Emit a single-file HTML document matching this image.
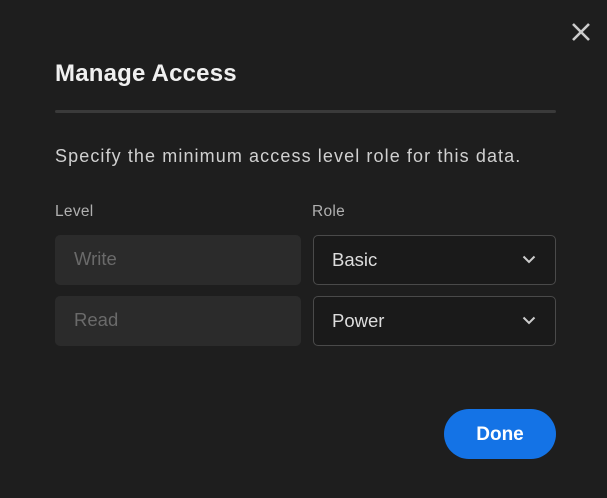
<!DOCTYPE html>
<html><head><style>
*{margin:0;padding:0;box-sizing:border-box}
body{width:607px;height:498px;background:#1e1e1e;font-family:"Liberation Sans",sans-serif;position:relative;overflow:hidden;color:#ddd}
.a{position:absolute}
h1{position:absolute;left:55px;top:60px;font-size:24px;font-weight:bold;color:#f0f0f0;letter-spacing:0.2px}
.hr{left:55px;top:110px;width:501px;height:3px;background:#3a3a3a;border-radius:2px}
.p{left:55px;top:146px;font-size:18px;color:#d0d0d0;letter-spacing:1.1px}
.lbl{top:203px;font-size:15.5px;color:#b0b0b0;letter-spacing:0.3px}
.in{left:55px;width:246px;height:50px;background:#2b2b2b;border-radius:5px;color:#6a6a6a;font-size:18.5px;padding:13px 0 0 19px}
.sel{left:313px;width:243px;height:50px;background:#1a1a1a;border:1.5px solid #4a4a4a;border-radius:5px;color:#ddd;font-size:18.5px;padding:13px 0 0 18px}
.sel svg{position:absolute;right:19px;top:19px}
.btn{left:444px;top:409px;width:112px;height:50px;border-radius:25px;background:#1473e6;color:#fff;font-weight:bold;font-size:19px;text-align:center;line-height:51px}
</style></head><body>
<svg class="a" style="left:571px;top:22px" width="20" height="20" viewBox="0 0 20 20"><path d="M2 2L18 18M18 2L2 18" stroke="#ccc" stroke-width="2.6"/></svg>
<h1>Manage Access</h1>
<div class="a hr"></div>
<div class="a p">Specify the minimum access level role for this data.</div>
<div class="a lbl" style="left:55px">Level</div>
<div class="a lbl" style="left:312px">Role</div>
<div class="a in" style="top:235px">Write</div>
<div class="a in" style="top:296px">Read</div>
<div class="a sel" style="top:235px">Basic<svg width="14" height="9" viewBox="0 0 14 9"><path d="M1.5 1.5L7 7L12.5 1.5" fill="none" stroke="#ccc" stroke-width="2"/></svg></div>
<div class="a sel" style="top:296px">Power<svg width="14" height="9" viewBox="0 0 14 9"><path d="M1.5 1.5L7 7L12.5 1.5" fill="none" stroke="#ccc" stroke-width="2"/></svg></div>
<div class="a btn">Done</div>
</body></html>
